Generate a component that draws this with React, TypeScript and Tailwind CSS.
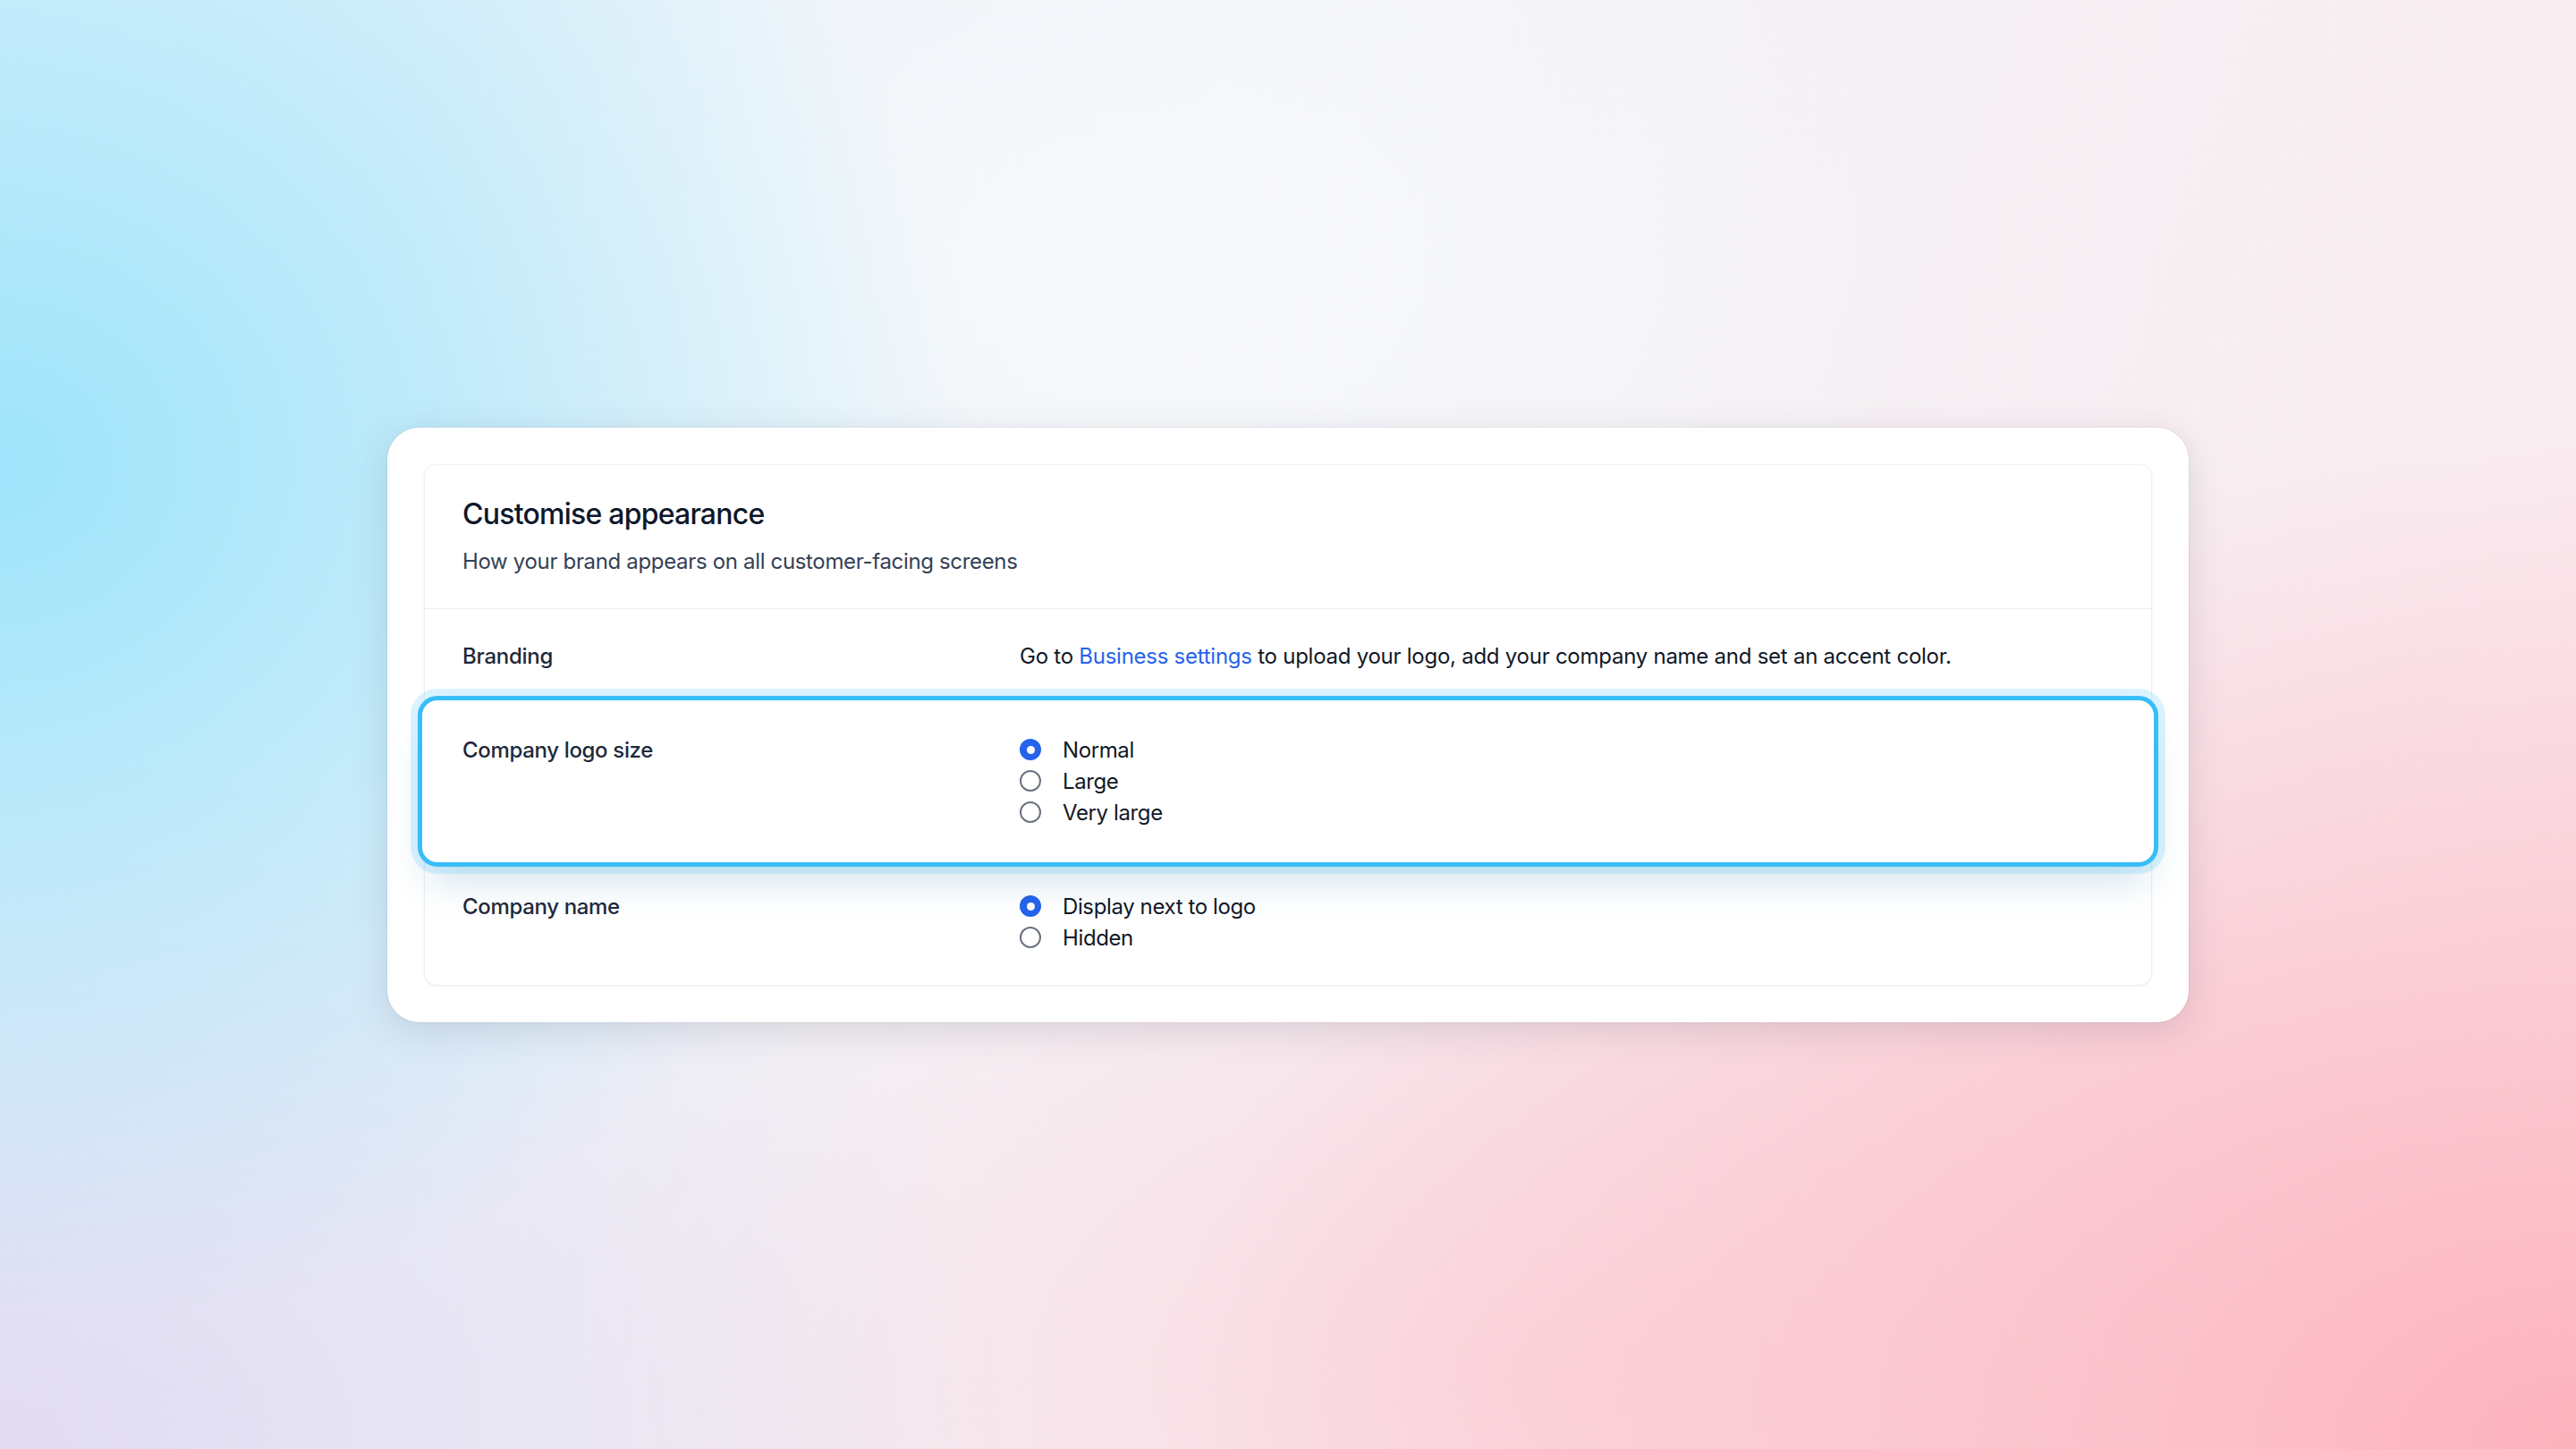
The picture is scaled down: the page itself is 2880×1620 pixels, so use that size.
import React from "react";

interface Option {
  label: string;
  checked?: boolean;
}

const Radio = ({ label, checked }: Option) => {
  return (
    <div className="flex items-center gap-[24px] leading-[35px]">
      {checked ? (
        <span className="flex h-[24px] w-[24px] shrink-0 items-center justify-center rounded-full bg-[#2563eb]">
          <span className="h-[9px] w-[9px] rounded-full bg-white" />
        </span>
      ) : (
        <span className="h-[24px] w-[24px] shrink-0 rounded-full border-2 border-[#6b7280] bg-white" />
      )}
      <span className="text-[24px] tracking-[-0.016em] text-[#111827]">{label}</span>
    </div>
  );
};

const App = () => {
  return (
    <div
      className="flex h-screen w-full items-center justify-center bg-[radial-gradient(ellipse_38%_60%_at_0%_32%,#9ee4fb_0%,rgba(158,228,251,0)_100%),radial-gradient(ellipse_30%_35%_at_45%_18%,#f7f9fc_0%,rgba(247,249,252,0)_100%),radial-gradient(ellipse_55%_70%_at_100%_100%,#fdb2bd_0%,rgba(253,178,189,0)_100%),radial-gradient(ellipse_40%_50%_at_0%_100%,#e2dbf2_0%,rgba(226,219,242,0)_100%),radial-gradient(ellipse_45%_45%_at_60%_95%,#fbdbe2_0%,rgba(251,219,226,0)_100%),linear-gradient(110deg,#e2f1fb_0%,#f3f4f8_45%,#fbe9ee_100%)]"
      style={{ fontFamily: "Inter, 'Noto Sans', sans-serif" }}
    >
      {/* Outer frame */}
      <div className="w-[2014px] rounded-[36px] bg-white p-[41px] shadow-[0_10px_40px_rgba(60,60,80,0.15)] ring-1 ring-black/5">
        {/* Settings card */}
        <div className="rounded-[14px] border border-[#eceef2] bg-white shadow-[0_1px_3px_rgba(0,0,0,0.05)]">
          {/* Header */}
          <div className="flex flex-col gap-[16px] border-b border-[#e8edf3] px-[42px] pt-[35px] pb-[35px]">
            <h2 className="text-[32px] font-medium leading-[40px] tracking-[-0.024em] text-[#0f172a]">
              Customise appearance
            </h2>
            <p className="text-[24px] leading-[34px] tracking-[-0.014em] text-[#334155]">
              How your brand appears on all customer-facing screens
            </p>
          </div>

          {/* Branding */}
          <div className="grid grid-cols-[623px_1fr] px-[42px] py-[35px] leading-[35px] tracking-[-0.016em]">
            <span className="text-[24px] font-medium text-[#1e293b]">Branding</span>
            <p className="text-[24px] text-[#111827]">
              Go to <span className="text-[#2563eb]">Business settings</span> to upload your logo, add your company
              name and set an accent color.
            </p>
          </div>

          {/* Company logo size (highlighted) */}
          <div className="relative z-10 -mx-[8px] -my-[8px] grid grid-cols-[623px_1fr] rounded-[22px] border-[5px] border-[#38bdf8] bg-white px-[45px] py-[38px] shadow-[0_0_0_8px_rgba(56,189,248,0.18),0_28px_44px_-12px_rgba(30,120,160,0.2)]">
            <span className="text-[24px] font-medium leading-[35px] tracking-[-0.014em] text-[#1e293b]">
              Company logo size
            </span>
            <div className="flex flex-col">
              <Radio label="Normal" checked />
              <Radio label="Large" />
              <Radio label="Very large" />
            </div>
          </div>

          {/* Company name */}
          <div className="grid grid-cols-[623px_1fr] px-[42px] py-[35px]">
            <span className="text-[24px] font-medium leading-[35px] tracking-[-0.014em] text-[#1e293b]">
              Company name
            </span>
            <div className="flex flex-col">
              <Radio label="Display next to logo" checked />
              <Radio label="Hidden" />
            </div>
          </div>
        </div>
      </div>
    </div>
  );
};

export default App;
